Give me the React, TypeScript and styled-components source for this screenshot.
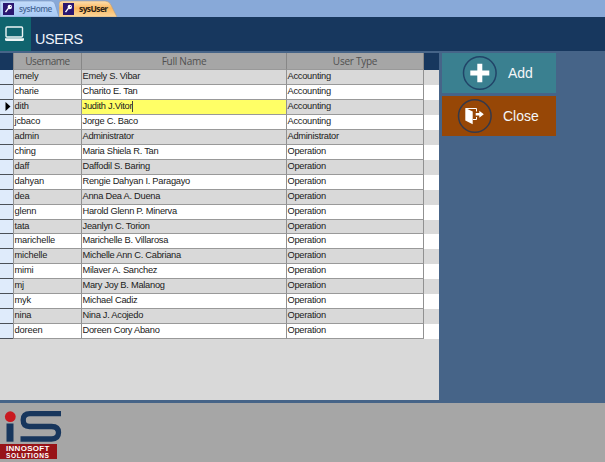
import React from "react";
import styled, { createGlobalStyle } from "styled-components";

const Global = createGlobalStyle`
  * { box-sizing: border-box; }
  body { margin: 0; overflow: hidden; font-family: "Liberation Sans", Arial, sans-serif; }
`;

const Screen = styled.div`
  width: 605px;
  height: 462px;
  display: flex;
  flex-direction: column;
  background: #466488;
`;

const TabBar = styled.nav`
  height: 17px;
  display: flex;
  background: #88a9d8;
  flex: none;
`;

const Tab = styled.div<{ $active?: boolean; $width: number }>`
  position: relative;
  width: ${(p) => p.$width}px;
  height: 17px;
  display: flex;
  align-items: center;
  padding: 1px 0 0 ${(p) => (p.$active ? 4 : 3)}px;
  gap: 5px;
  font: ${(p) => (p.$active ? 700 : 600)} ${(p) => (p.$active ? 8.5 : 8.2)}px "Open Sans", "Noto Sans", sans-serif;
  letter-spacing: ${(p) => (p.$active ? -0.6 : -0.45)}px;
  color: ${(p) => (p.$active ? "#2c2418" : "#4a6a98")};
`;

const TabShape = styled.svg`
  position: absolute;
  inset: 0;
`;

const TabIcon = styled.svg`
  position: relative;
  flex: none;
`;

const TabText = styled.span`
  position: relative;
  line-height: 14px;
`;

const TitleBar = styled.header`
  height: 34px;
  flex: none;
  display: flex;
  background: #17375e;
`;

const TitleIcon = styled.div`
  width: 31px;
  height: 34px;
  background: #10646e;
`;

const Title = styled.h1`
  margin: 0;
  padding: 14px 0 0 4px;
  font-size: 14.4px;
  line-height: 17px;
  letter-spacing: -0.35px;
  font-weight: 400;
  color: #f0f4fa;
`;

const Content = styled.main`
  display: flex;
  gap: 3px;
  height: 347px;
  margin: 2px 0 3px;
  flex: none;
`;

const Sheet = styled.section`
  width: 439px;
  background: #d9d9d9;
`;

const HeadRow = styled.div`
  display: flex;
  height: 17px;
  background: #17375e;
`;

const HeadCell = styled.div<{ $width: number; $first?: boolean }>`
  width: ${(p) => p.$width}px;
  background: #a6a6a6;
  border-right: 1px solid #878787;
  border-bottom: 1px solid #999;
  border-left: ${(p) => (p.$first ? "1px solid #878787" : "0")};
  text-align: center;
  font: 10px/17px "Open Sans", "Noto Sans", sans-serif;
  letter-spacing: ${(p) => (p.$first ? -0.5 : -0.26)}px;
  color: #505050;
`;

const Corner = styled.div`
  width: 13px;
`;

const Row = styled.div<{ $shade: boolean }>`
  display: flex;
  height: 14.96px;
  background: ${(p) => (p.$shade ? "#d9d9d9" : "#fff")};
`;

const Selector = styled.div`
  width: 13px;
  display: flex;
  align-items: center;
  padding-left: 5px;
  background: #dfebfb;
  border-bottom: 1px solid #4b5058;
`;

const Cell = styled.div<{ $width: number; $first?: boolean; $edit?: boolean }>`
  width: ${(p) => p.$width}px;
  padding-left: 0.5px;
  border-right: 1px solid #919191;
  border-bottom: 1px solid #999;
  border-left: ${(p) => (p.$first ? "1px solid #919191" : "0")};
  background: ${(p) => (p.$edit ? "#ffff66" : "transparent")};
  font-size: 9.3px;
  line-height: 12px;
  letter-spacing: ${(p) => (p.$first ? -0.18 : -0.27)}px;
  white-space: nowrap;
  color: #202020;
`;

const Caret = styled.span`
  display: inline-block;
  width: 1px;
  height: 11px;
  background: #444;
  vertical-align: top;
  margin-top: 1px;
`;

const Actions = styled.aside`
  width: 114px;
  display: flex;
  flex-direction: column;
  gap: 3px;
`;

const Action = styled.button<{ $color: string; $left: number }>`
  height: 40px;
  display: flex;
  align-items: center;
  padding: 0 0 0 ${(p) => p.$left}px;
  gap: 10px;
  border: 0;
  background: ${(p) => p.$color};
  color: #f4f6f8;
  font: 14px "Liberation Sans", Arial, sans-serif;
`;

const ActionIcon = styled.svg`
  flex: none;
`;

const Footer = styled.footer`
  flex: 1;
  background: #a6a6a6;
  padding-top: 7px;
`;

const Logo = styled.div`
  width: 57px;
`;

const LogoMark = styled.svg`
  display: block;
`;

const LogoBand = styled.div`
  height: 15px;
  padding: 0 0 0 6px;
  background: #981318;
  color: #fff;
  font-weight: 700;
`;

const LogoLine = styled.div<{ $track: number; $size: number }>`
  font-size: ${(p) => p.$size}px;
  line-height: 7px;
  padding-top: ${(p) => (p.$size > 7 ? 1 : 0)}px;
  letter-spacing: ${(p) => p.$track}px;
  white-space: nowrap;
`;

const FormIcon = () => (
  <TabIcon width="11" height="12" viewBox="0 0 11 12">
    <rect width="11" height="12" fill="#2b1770" />
    <circle cx="6.8" cy="4" r="2.2" fill="#fff" />
    <path d="M5.5 5.2 2.5 9.2" stroke="#fff" strokeWidth="1.4" />
    <circle cx="7.5" cy="3.4" r=".5" fill="#2b1770" />
  </TabIcon>
);

const users: [string, string, string][] = [
  ["emely", "Emely S. Vibar", "Accounting"],
  ["charie", "Charito E. Tan", "Accounting"],
  ["dith", "Judith J.Vitor", "Accounting"],
  ["jcbaco", "Jorge C. Baco", "Accounting"],
  ["admin", "Administrator", "Administrator"],
  ["ching", "Maria Shiela R. Tan", "Operation"],
  ["daff", "Daffodil S. Baring", "Operation"],
  ["dahyan", "Rengie Dahyan I. Paragayo", "Operation"],
  ["dea", "Anna Dea A. Duena", "Operation"],
  ["glenn", "Harold Glenn P. Minerva", "Operation"],
  ["tata", "Jeanlyn C. Torion", "Operation"],
  ["marichelle", "Marichelle B. Villarosa", "Operation"],
  ["michelle", "Michelle Ann C. Cabriana", "Operation"],
  ["mimi", "Milaver A. Sanchez", "Operation"],
  ["mj", "Mary Joy B. Malanog", "Operation"],
  ["myk", "Michael Cadiz", "Operation"],
  ["nina", "Nina J. Acojedo", "Operation"],
  ["doreen", "Doreen Cory Abano", "Operation"],
];

const EDITED = 2;

export default function App() {
  return (
    <Screen>
      <Global />
      <TabBar>
        <Tab $width={59}>
          <TabShape width="62" height="17">
            <defs>
              <linearGradient id="idle" x2="0" y2="1">
                <stop offset="0" stopColor="#c2dbfa" />
                <stop offset="1" stopColor="#a6c8f5" />
              </linearGradient>
            </defs>
            <path d="M0 1H51Q54 1 55 4L59 17H0Z" fill="url(#idle)" stroke="#7994bd" strokeWidth=".6" />
          </TabShape>
          <FormIcon />
          <TabText>sysHome</TabText>
        </Tab>
        <Tab $active $width={58}>
          <TabShape width="58" height="17">
            <defs>
              <linearGradient id="active" x2="0" y2="1">
                <stop offset="0" stopColor="#fde0b0" />
                <stop offset=".45" stopColor="#fbb75f" />
                <stop offset="1" stopColor="#fbd79c" />
              </linearGradient>
            </defs>
            <path d="M0 17V4Q0 1 3 1H46Q50 1 52 5L58 17Z" fill="url(#active)" stroke="#b29b83" strokeWidth=".6" />
          </TabShape>
          <FormIcon />
          <TabText>sysUser</TabText>
        </Tab>
      </TabBar>

      <TitleBar>
        <TitleIcon>
          <svg width="31" height="34" viewBox="0 0 31 34">
            <rect x="6" y="10" width="16.5" height="10" rx="1" fill="none" stroke="#edf5f5" strokeWidth="1.4" />
            <path d="M5 21.3H24V22.5Q24 24 22.5 24H6.5Q5 24 5 22.5Z" fill="#edf5f5" />
          </svg>
        </TitleIcon>
        <Title>USERS</Title>
      </TitleBar>

      <Content>
        <Sheet>
          <HeadRow>
            <Corner />
            <HeadCell $width={69} $first>Username</HeadCell>
            <HeadCell $width={205}>Full Name</HeadCell>
            <HeadCell $width={137}>User Type</HeadCell>
          </HeadRow>
          {users.map(([name, full, type], i) => (
            <Row key={name} $shade={i % 2 === 0}>
              <Selector>
                {i === EDITED && (
                  <svg width="6" height="9" viewBox="0 0 6 9">
                    <path d="M.5 0 5.5 4.5.5 9Z" fill="#000" />
                  </svg>
                )}
              </Selector>
              <Cell $width={69} $first>{name}</Cell>
              <Cell $width={205} $edit={i === EDITED}>
                {full}
                {i === EDITED && <Caret />}
              </Cell>
              <Cell $width={137}>{type}</Cell>
            </Row>
          ))}
        </Sheet>

        <Actions>
          <Action $color="#3a8090" $left={20}>
            <ActionIcon width="36" height="36" viewBox="0 0 36 36">
              <circle cx="17.8" cy="18" r="16.3" fill="none" stroke="#214468" strokeWidth="1.5" />
              <path d="M17.8 8.7V27.3M8.3 18H27.3" stroke="#fff" strokeWidth="5" />
            </ActionIcon>
            Add
          </Action>
          <Action $color="#974706" $left={15}>
            <ActionIcon width="36" height="36" viewBox="0 0 36 36">
              <circle cx="17.8" cy="18" r="16.3" fill="none" stroke="#35394a" strokeWidth="1.5" />
              <path d="M8.3 10 15.7 13.5V26.3L8.3 22.5Z" fill="#fff" />
              <path d="M8.8 10.5H19.5V13.5M19.5 19V21.5H16" fill="none" stroke="#fff" strokeWidth="1" />
              <path d="M18.7 15.1H22.3V12.7L26.8 16.3 22.3 19.8V17.5H18.7Z" fill="#fff" />
            </ActionIcon>
            Close
          </Action>
        </Actions>
      </Content>

      <Footer>
        <Logo>
          <LogoMark width="64" height="34" viewBox="0 0 64 34">
            <circle cx="10.3" cy="6.7" r="5.4" fill="#c91920" />
            <path d="M6.5 13.5H13.5V31.7H6.5Z" fill="#17365d" />
            <path
              d="M61 3.7H30Q23.2 3.7 23.2 10 23.2 16.5 29.5 16.5H51.5Q58.5 16.5 58.5 22.6 58.5 29 51.5 29H20.5"
              fill="none"
              stroke="#17365d"
              strokeWidth="5.3"
            />
          </LogoMark>
          <LogoBand>
            <LogoLine $size={8} $track={0.3}>INNOSOFT</LogoLine>
            <LogoLine $size={6.6} $track={0.55}>SOLUTIONS</LogoLine>
          </LogoBand>
        </Logo>
      </Footer>
    </Screen>
  );
}
